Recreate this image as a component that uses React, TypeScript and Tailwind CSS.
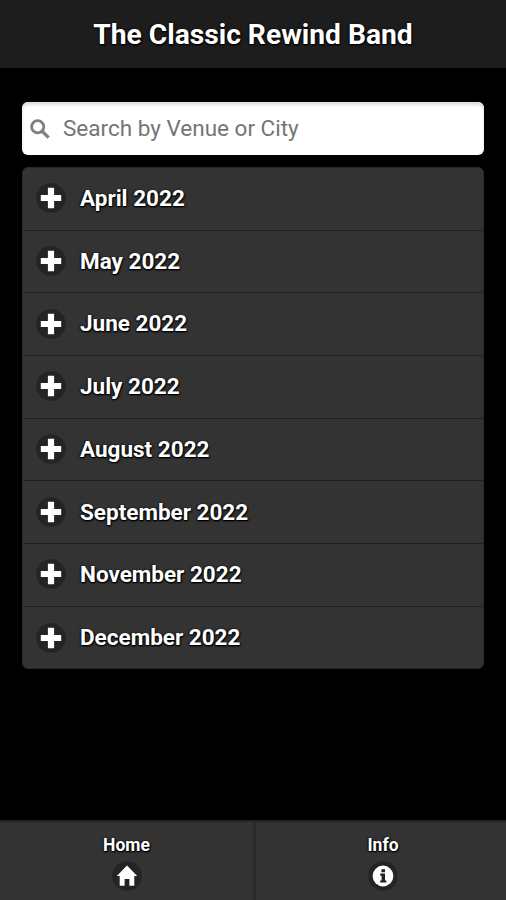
import { useState } from "react";

const months = [
  "April 2022",
  "May 2022",
  "June 2022",
  "July 2022",
  "August 2022",
  "September 2022",
  "November 2022",
  "December 2022",
];

const textShadow =
  "[text-shadow:0_1px_1px_#000,1px_1px_2px_#000,-1px_0_2px_#111]";

function SearchIcon() {
  return (
    <svg viewBox="0 0 20 20" className="w-5 h-5 shrink-0" fill="none">
      <circle cx="7.7" cy="7.7" r="6.1" stroke="#7f7f7f" strokeWidth="2.8" />
      <path d="M12.3 12.3L18.6 18.6" stroke="#7f7f7f" strokeWidth="3.3" />
    </svg>
  );
}

function PlusIcon() {
  return (
    <svg viewBox="0 0 32 32" className="w-8 h-8 shrink-0">
      <circle cx="16" cy="16" r="14.8" fill="#242424" />
      <path
        d="M12.9 5.8h6.2v7.1h7.1v6.2h-7.1v7.1h-6.2v-7.1H5.8v-6.2h7.1z"
        fill="#fff"
      />
    </svg>
  );
}

function HomeIcon() {
  return (
    <svg viewBox="0 0 32 32" className="w-8 h-8">
      <circle cx="16" cy="16" r="14.8" fill="#242424" />
      <path
        d="M16 5.5L26.2 16H23.3V25.8H18.4V19H13.6V25.8H8.7V16H5.8z"
        fill="#fff"
      />
    </svg>
  );
}

function InfoIcon() {
  return (
    <svg viewBox="0 0 32 32" className="w-8 h-8">
      <circle cx="16" cy="16" r="14.8" fill="#242424" />
      <circle cx="16" cy="16" r="10.4" fill="#fff" />
      <path
        d="M14.4 9.2h3.6v3h-3.6zM13.2 13.6H18v6.8h1.4v2.2h-6.2v-2.2h1.4v-4.6h-1.4z"
        fill="#222222"
      />
    </svg>
  );
}

export default function App() {
  const [query, setQuery] = useState("");

  return (
    <div className="flex h-[900px] w-[506px] flex-col overflow-hidden bg-black font-['Roboto',sans-serif] text-white">
      <header className="flex h-[68px] shrink-0 items-center justify-center border-b border-[#1b1b1b] bg-[#1d1d1d] pt-1">
        <h1 className={`text-[28.2px] leading-none font-bold ${textShadow}`}>
          The Classic Rewind Band
        </h1>
      </header>

      <main className="flex-1 px-[22px] pt-[34px]">
        <label className="flex h-[53px] items-center gap-[13px] rounded-md bg-white pl-2 shadow-[inset_0_3px_3px_#ddd]">
          <SearchIcon />
          <input
            value={query}
            onChange={(e) => setQuery(e.target.value)}
            placeholder="Search by Venue or City"
            className="w-full bg-transparent text-[22.5px] text-black outline-none placeholder:text-[#757575]"
          />
        </label>

        <ul className="mt-3 h-[502px] overflow-hidden rounded-md border border-[#292929] bg-[#333333]">
          {months.map((month) => (
            <li
              key={month}
              className="flex h-[62.7px] items-center border-b border-[#1f1f1f] pb-px pl-3 last:border-b-0"
            >
              <PlusIcon />
              <span
                className={`ml-[13px] text-[22.5px] leading-none font-bold ${textShadow}`}
              >
                {month}
              </span>
            </li>
          ))}
        </ul>
      </main>

      <nav className="flex h-20 shrink-0 border-t-2 border-[#242424] bg-[#333333]">
        <button className="flex w-64 flex-col items-center border-r-3 border-[#2a2a2a] pt-[11px]">
          <span className={`text-[17.5px] leading-6 font-bold ${textShadow}`}>
            Home
          </span>
          <span className="mt-[3px]">
            <HomeIcon />
          </span>
        </button>
        <button className="flex flex-1 flex-col items-center pt-[11px] pl-1">
          <span className={`text-[17.5px] leading-6 font-bold ${textShadow}`}>
            Info
          </span>
          <span className="mt-[3px]">
            <InfoIcon />
          </span>
        </button>
      </nav>
    </div>
  );
}
